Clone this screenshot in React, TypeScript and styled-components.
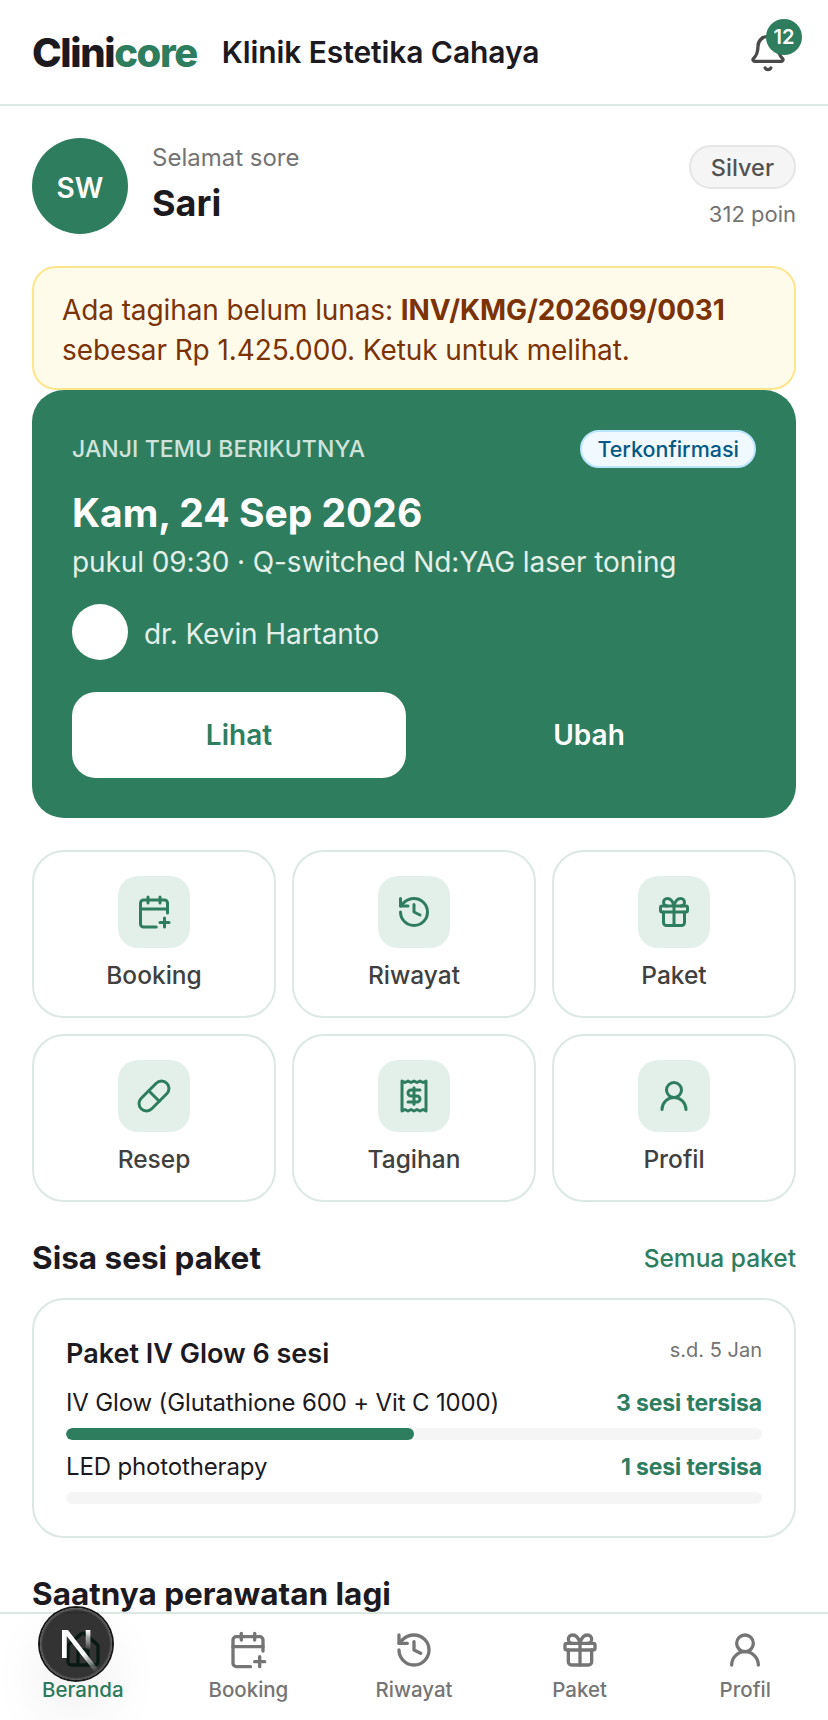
import { ReactNode } from "react";
import styled, { createGlobalStyle } from "styled-components";
import {
  Bell,
  CalendarPlus,
  Gift,
  History,
  House,
  Pill,
  Receipt,
  UserRound,
} from "lucide-react";

const GlobalStyle = createGlobalStyle`
  html, body {
    margin: 0;
    height: 100%;
    overflow: hidden;
    background: #fff;
  }
  body {
    font-family: Inter, "Noto Sans", sans-serif;
    color: #1c1a1f;
  }
  * { box-sizing: border-box; }
`;

const Page = styled.div`
  width: 828px;
  height: 1720px;
  overflow: hidden;
  display: flex;
  flex-direction: column;
`;

const Header = styled.header`
  height: 106px;
  flex-shrink: 0;
  display: flex;
  align-items: center;
  gap: 25px;
  padding: 0 32px;
  border-bottom: 2px solid #dce8e2;
`;

const Logo = styled.div`
  font-size: 40px;
  font-weight: 800;
  letter-spacing: -1.4px;
  color: #1c1a1f;
  span { color: #2f7d5f; }
`;

const ClinicName = styled.div`
  flex: 1;
  font-size: 30px;
  font-weight: 600;
  letter-spacing: -0.1px;
`;

const BellWrap = styled.div`
  position: relative;
  width: 40px;
  height: 40px;
  margin-right: 8px;
  margin-top: 2px;
  color: #4a4a4a;
`;

const BellBadge = styled.span`
  position: absolute;
  top: -14px;
  right: -14px;
  min-width: 36px;
  height: 36px;
  border-radius: 18px;
  background: #2f7d5f;
  color: #fff;
  font-size: 20px;
  font-weight: 600;
  display: flex;
  align-items: center;
  justify-content: center;
`;

const Main = styled.main`
  padding: 32px 32px 0;
`;

const Greeting = styled.section`
  display: flex;
  align-items: center;
  gap: 24px;
  height: 96px;
`;

const Avatar = styled.div`
  width: 96px;
  height: 96px;
  padding-top: 4px;
  border-radius: 50%;
  background: #2f7d5f;
  color: #fff;
  font-size: 28px;
  font-weight: 600;
  display: flex;
  align-items: center;
  justify-content: center;
`;

const GreetingText = styled.div`
  flex: 1;
  padding-bottom: 4px;
  display: flex;
  flex-direction: column;
  gap: 9px;
`;

const Hello = styled.div`
  font-size: 24px;
  color: #737373;
`;

const Name = styled.div`
  font-size: 36px;
  font-weight: 700;
`;

const Tier = styled.div`
  display: flex;
  flex-direction: column;
  align-items: flex-end;
  gap: 12px;
`;

const TierPill = styled.span`
  height: 44px;
  padding: 0 20px;
  border-radius: 22px;
  border: 2px solid #e5e5e5;
  background: #f5f5f5;
  color: #525252;
  font-size: 23.5px;
  font-weight: 500;
  display: flex;
  align-items: center;
`;

const Points = styled.span`
  font-size: 22px;
  color: #737373;
`;

const Alert = styled.div`
  margin-top: 32px;
  height: 124px;
  padding: 22px 28px 0;
  border: 2px solid #fde68a;
  border-radius: 24px;
  background: #fffbeb;
  color: #7b3306;
  font-size: 28px;
  line-height: 40px;
  letter-spacing: -0.1px;
  b { font-weight: 700; }
`;

const NextCard = styled.section`
  padding: 40px;
  border-radius: 32px;
  background: #2f7d5f;
  color: #fff;
`;

const NextHead = styled.div`
  display: flex;
  align-items: center;
  justify-content: space-between;
`;

const Eyebrow = styled.span`
  font-size: 23px;
  font-weight: 500;
  letter-spacing: 0.1px;
  color: #cfe3da;
`;

const StatusPill = styled.span`
  height: 38px;
  padding: 0 15px;
  border-radius: 19px;
  border: 2px solid #bae6fd;
  background: #f0f9ff;
  color: #075985;
  font-size: 21.5px;
  font-weight: 500;
  display: flex;
  align-items: center;
`;

const NextDate = styled.div`
  margin-top: 21px;
  font-size: 39px;
  font-weight: 700;
`;

const NextMeta = styled.div`
  margin-top: 9px;
  font-size: 28px;
  letter-spacing: -0.1px;
  color: #e3f0e9;
`;

const Doctor = styled.div`
  margin-top: 25px;
  display: flex;
  align-items: center;
  gap: 16px;
  font-size: 28px;
  letter-spacing: -0.1px;
  color: #e3f0e9;
`;

const DoctorPhoto = styled.span`
  width: 56px;
  height: 56px;
  border-radius: 50%;
  background: #fff;
`;

const DoctorName = styled.span`
  padding-top: 4px;
`;

const NextActions = styled.div`
  margin-top: 32px;
  display: grid;
  grid-template-columns: 1fr 1fr;
  gap: 16px;
`;

const NextButton = styled.button<{ $solid?: boolean }>`
  height: 86px;
  border: 0;
  border-radius: 24px;
  background: ${(p) => (p.$solid ? "#fff" : "transparent")};
  color: ${(p) => (p.$solid ? "#2f7d5f" : "#fff")};
  font-family: inherit;
  font-size: 28px;
  font-weight: 600;
`;

const ActionGrid = styled.section`
  margin-top: 32px;
  display: grid;
  grid-template-columns: repeat(3, 1fr);
  gap: 16px;
`;

const ActionTile = styled.div`
  height: 168px;
  border: 2px solid #dce8e2;
  border-radius: 32px;
  display: flex;
  flex-direction: column;
  align-items: center;
  padding-top: 24px;
  gap: 12px;
  font-size: 24.5px;
  font-weight: 550;
  color: #404040;
`;

const ActionIcon = styled.span`
  width: 72px;
  height: 72px;
  border-radius: 20px;
  background: #e3f0e9;
  color: #2f7d5f;
  display: flex;
  align-items: center;
  justify-content: center;
`;

const SectionHead = styled.div`
  margin-top: 36px;
  display: flex;
  align-items: center;
  justify-content: space-between;
`;

const SectionTitle = styled.h2`
  margin: 0;
  font-size: 31.5px;
  font-weight: 700;
`;

const SectionLink = styled.span`
  font-size: 24.5px;
  font-weight: 550;
  color: #2f7d5f;
`;

const PackageCard = styled.section`
  margin-top: 21px;
  padding: 32px;
  border: 2px solid #dce8e2;
  border-radius: 32px;
`;

const PackageHead = styled.div`
  display: flex;
  align-items: flex-start;
  justify-content: space-between;
  font-size: 27px;
  line-height: 44px;
  font-weight: 600;
  small {
    font-size: 20px;
    line-height: 36px;
    font-weight: 400;
    color: #737373;
  }
`;

const SessionRow = styled.div`
  margin-top: 12px;
  display: flex;
  justify-content: space-between;
  font-size: 24px;
  line-height: 30px;
  letter-spacing: -0.15px;
  b {
    font-size: 23px;
    font-weight: 700;
    color: #2f7d5f;
  }
`;

const Track = styled.div`
  margin-top: 10px;
  height: 12px;
  border-radius: 6px;
  background: #f5f5f5;
  overflow: hidden;
`;

const Fill = styled.div`
  height: 100%;
  border-radius: 6px;
  background: #2f7d5f;
`;

const BottomNav = styled.nav`
  position: fixed;
  left: 0;
  right: 0;
  bottom: 0;
  height: 108px;
  background: #fff;
  border-top: 2px solid #dce8e2;
  display: grid;
  grid-template-columns: repeat(5, 1fr);
`;

const NavItem = styled.div<{ $active?: boolean }>`
  display: flex;
  flex-direction: column;
  align-items: center;
  padding-top: 16px;
  gap: 7px;
  font-size: 20.5px;
  line-height: 26px;
  font-weight: 500;
  color: ${(p) => (p.$active ? "#2f7d5f" : "#757575")};
`;

const DevBadge = styled.div`
  position: fixed;
  left: 40px;
  bottom: 40px;
  width: 72px;
  height: 72px;
  border-radius: 50%;
  background: rgba(0, 0, 0, 0.8);
  box-shadow: 0 0 0 2px #171717, inset 0 0 0 2px rgba(255, 255, 255, 0.14),
    0 32px 64px -16px rgba(0, 0, 0, 0.24);
  display: flex;
  align-items: center;
  justify-content: center;
`;

const actions: { label: string; icon: ReactNode }[] = [
  { label: "Booking", icon: <CalendarPlus size={36} /> },
  { label: "Riwayat", icon: <History size={36} /> },
  { label: "Paket", icon: <Gift size={36} /> },
  { label: "Resep", icon: <Pill size={36} /> },
  { label: "Tagihan", icon: <Receipt size={36} /> },
  { label: "Profil", icon: <UserRound size={36} /> },
];

const navItems: { label: string; icon: ReactNode; active?: boolean }[] = [
  { label: "Beranda", icon: <House size={40} />, active: true },
  { label: "Booking", icon: <CalendarPlus size={40} /> },
  { label: "Riwayat", icon: <History size={40} /> },
  { label: "Paket", icon: <Gift size={40} /> },
  { label: "Profil", icon: <UserRound size={40} /> },
];

export default function App() {
  return (
    <Page>
      <GlobalStyle />
      <Header>
        <Logo>
          Clini<span>core</span>
        </Logo>
        <ClinicName>Klinik Estetika Cahaya</ClinicName>
        <BellWrap>
          <Bell size={40} />
          <BellBadge>12</BellBadge>
        </BellWrap>
      </Header>
      <Main>
        <Greeting>
          <Avatar>SW</Avatar>
          <GreetingText>
            <Hello>Selamat sore</Hello>
            <Name>Sari</Name>
          </GreetingText>
          <Tier>
            <TierPill>Silver</TierPill>
            <Points>312 poin</Points>
          </Tier>
        </Greeting>
        <Alert>
          Ada tagihan belum lunas: <b>INV/KMG/202609/0031</b> sebesar Rp
          1.425.000. Ketuk untuk melihat.
        </Alert>
        <NextCard>
          <NextHead>
            <Eyebrow>JANJI TEMU BERIKUTNYA</Eyebrow>
            <StatusPill>Terkonfirmasi</StatusPill>
          </NextHead>
          <NextDate>Kam, 24 Sep 2026</NextDate>
          <NextMeta>pukul 09:30 · Q-switched Nd:YAG laser toning</NextMeta>
          <Doctor>
            <DoctorPhoto />
            <DoctorName>dr. Kevin Hartanto</DoctorName>
          </Doctor>
          <NextActions>
            <NextButton $solid>Lihat</NextButton>
            <NextButton>Ubah</NextButton>
          </NextActions>
        </NextCard>
        <ActionGrid>
          {actions.map((a) => (
            <ActionTile key={a.label}>
              <ActionIcon>{a.icon}</ActionIcon>
              {a.label}
            </ActionTile>
          ))}
        </ActionGrid>
        <SectionHead>
          <SectionTitle>Sisa sesi paket</SectionTitle>
          <SectionLink>Semua paket</SectionLink>
        </SectionHead>
        <PackageCard>
          <PackageHead>
            Paket IV Glow 6 sesi
            <small>s.d. 5 Jan</small>
          </PackageHead>
          <SessionRow>
            IV Glow (Glutathione 600 + Vit C 1000)
            <b>3 sesi tersisa</b>
          </SessionRow>
          <Track>
            <Fill style={{ width: `${(3 / 6) * 100}%` }} />
          </Track>
          <SessionRow>
            LED phototherapy
            <b>1 sesi tersisa</b>
          </SessionRow>
          <Track />
        </PackageCard>
        <SectionHead>
          <SectionTitle>Saatnya perawatan lagi</SectionTitle>
        </SectionHead>
      </Main>
      <BottomNav>
        {navItems.map((n) => (
          <NavItem key={n.label} $active={n.active}>
            {n.icon}
            {n.label}
          </NavItem>
        ))}
      </BottomNav>
      <DevBadge>
        <svg width="70" height="70" viewBox="0 0 180 180" fill="none">
          <defs>
            <linearGradient id="nextA" x1="109" y1="116" x2="144" y2="160" gradientUnits="userSpaceOnUse">
              <stop stopColor="#fff" />
              <stop offset="1" stopColor="#fff" stopOpacity="0" />
            </linearGradient>
            <linearGradient id="nextB" x1="121" y1="54" x2="120" y2="106" gradientUnits="userSpaceOnUse">
              <stop stopColor="#fff" />
              <stop offset="1" stopColor="#fff" stopOpacity="0" />
            </linearGradient>
          </defs>
          <path
            d="M149.508 157.52L69.142 54H54V125.97H66.114V69.384L139.999 164.845C143.333 162.614 146.509 160.165 149.508 157.52Z"
            fill="url(#nextA)"
          />
          <rect x="115" y="54" width="12" height="72" fill="url(#nextB)" />
        </svg>
      </DevBadge>
    </Page>
  );
}
